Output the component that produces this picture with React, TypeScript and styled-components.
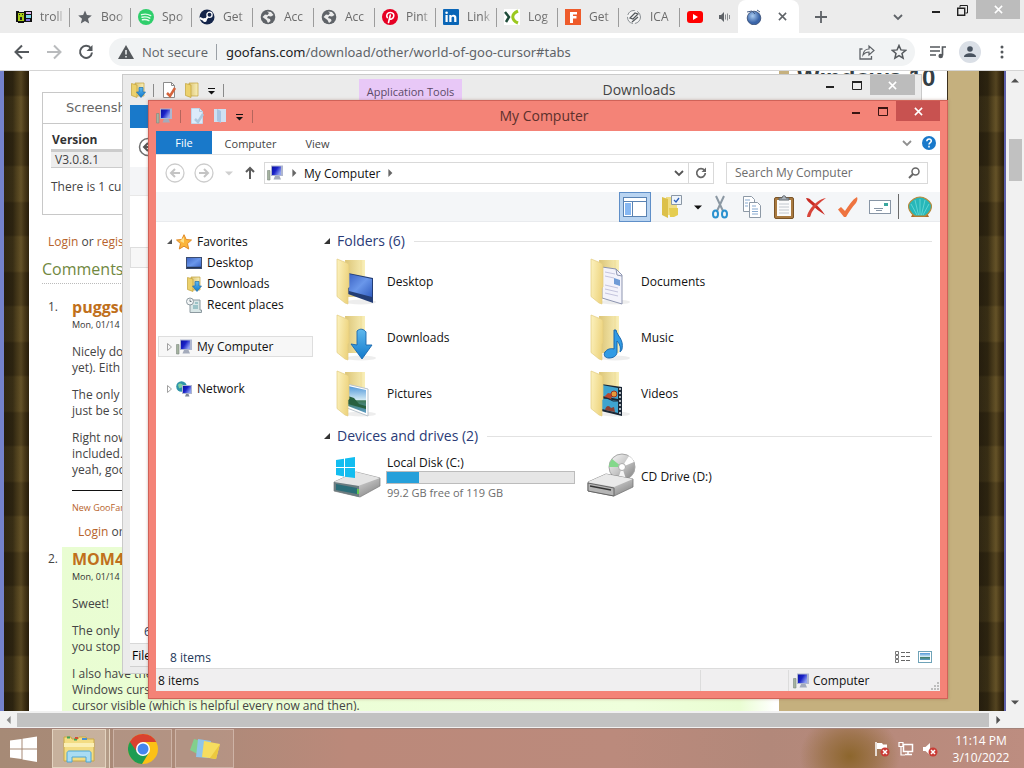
import React from "react";
import styled, { createGlobalStyle, css } from "styled-components";

const ui = `"Open Sans", "Noto Sans", sans-serif`;

const GlobalStyle = createGlobalStyle`
  *, *::before, *::after { box-sizing: border-box; }
  body { margin: 0; font-family: ${ui}; font-size: 12px; overflow: hidden; }
  button { font: inherit; color: inherit; background: none; border: 0; padding: 0; margin: 0; }
  h1, h2, h3, p, ul, ol { margin: 0; padding: 0; font-weight: normal; }
  ul, ol { list-style: none; }
  svg { display: block; flex: none; }
`;

/* ---------- desktop ---------- */

const Desktop = styled.div`
  position: relative;
  height: 100vh;
  min-height: 640px;
  display: flex;
  flex-direction: column;
  overflow: hidden;
`;

const Browser = styled.div`
  flex: 1;
  min-height: 0;
  display: flex;
  flex-direction: column;
  background: #fff;
`;

/* ---------- browser tab strip ---------- */

const TabStrip = styled.div`
  display: flex;
  height: 33px;
  flex: none;
  padding-left: 9px;
  background: #ececec;
  color: #6b6b6b;
`;

const Tab = styled.button`
  flex: 0 1 61px;
  min-width: 0;
  height: 33px;
  display: flex;
  align-items: center;
  gap: 8px;
  padding: 0 5px 0 7px;
  position: relative;
  font: 12px/16px ${ui};
  text-align: left;
  &::after {
    content: "";
    position: absolute;
    right: 0;
    top: 8px;
    height: 19px;
    width: 1px;
    background: #9c9c9c;
  }
`;

const TabText = styled.span`
  flex: 1;
  white-space: nowrap;
  mask-image: linear-gradient(90deg, #000 65%, transparent);
`;

const MediaTab = styled(Tab)`
  flex-basis: 58px;
  gap: 15px;
  padding-right: 6px;
  &::after { display: none; }
`;

const ActiveTab = styled(Tab)`
  background: #fff;
  border-radius: 8px 8px 0 0;
  gap: 16px;
  padding: 0 8px;
  &::after { display: none; }
`;

const StripButton = styled.button<{ $w: number }>`
  width: ${(p) => p.$w}px;
  height: 33px;
  display: flex;
  align-items: center;
  justify-content: center;
`;

const StripEnd = styled.div`
  margin-left: auto;
  display: flex;
  padding-right: 4px;
`;

const Caption = styled.button<{ $w?: number; $h?: number; $bg?: string }>`
  width: ${(p) => p.$w ?? 27}px;
  height: ${(p) => p.$h ?? 20}px;
  background: ${(p) => p.$bg ?? "transparent"};
  display: flex;
  align-items: center;
  justify-content: center;
`;

/* ---------- browser toolbar ---------- */

const NavBar = styled.div`
  height: 38px;
  flex: none;
  display: flex;
  align-items: center;
  padding: 0 6px;
  border-bottom: 1px solid #d5d5d5;
  color: #5f6368;
`;

const NavButton = styled.button`
  width: 32px;
  height: 32px;
  display: flex;
  align-items: center;
  justify-content: center;
`;

const OmniBox = styled.div`
  flex: 1;
  height: 28px;
  margin: 0 7px;
  padding: 0 0 0 9px;
  border-radius: 14px;
  background: #f1f3f4;
  display: flex;
  align-items: center;
  font: 13px/20px ${ui};
`;

const Secure = styled.button`
  display: flex;
  align-items: center;
  gap: 8px;
  padding-right: 8px;
  border-right: 1px solid #9aa0a6;
  line-height: 16px;
`;

const Url = styled.span`
  flex: 1;
  padding-left: 9px;
  white-space: nowrap;
  font-family: "Noto Sans", sans-serif;
  b { font-weight: normal; color: #202124; }
`;

const Avatar = styled.span`
  width: 22px;
  height: 22px;
  border-radius: 50%;
  background: #dadfe6;
  display: flex;
  align-items: center;
  justify-content: center;
`;

/* ---------- web page ---------- */

const Viewport = styled.div`
  flex: 1;
  min-height: 0;
  display: flex;
`;

const WebPage = styled.div`
  flex: 1;
  min-width: 0;
  display: flex;
  overflow: hidden;
  background: #fff;
  font: 12px/16px ${ui};
  color: #444;
`;

const Curtain = styled.div<{ $side: "left" | "right" }>`
  flex: none;
  width: ${(p) => (p.$side === "left" ? 29 : 27)}px;
  ${(p) => (p.$side === "left" ? "border-left: 4px solid #7482cc;" : "border-right: 2px solid #5c5fa8;")}
  background:
    repeating-linear-gradient(180deg, rgba(20,12,0,0.22) 0 24px, rgba(90,70,25,0.12) 26px 60px, rgba(20,12,0,0.22) 62px 70px),
    linear-gradient(90deg, #2a2312 0%, #332a14 35%, #4c3e1d 50%, #66542a 68%, #4a3a19 82%, #2a1f0c 100%);
`;

const Article = styled.main`
  flex: 1;
  min-width: 0;
  padding: 21px 0 0 13px;
  white-space: nowrap;
  overflow: hidden;
`;

const Panel = styled.section`
  height: 123px;
  border: 1px solid #c8c8c8;
  margin-right: 13px;
`;

const PanelTab = styled.button`
  display: block;
  width: 100%;
  height: 31px;
  padding-left: 23px;
  text-align: left;
  border-bottom: 1px solid #c8c8c8;
  font: 13px/30px "DejaVu Sans", sans-serif;
  color: #666;
`;

const VersionTable = styled.table`
  margin: 8px 8px 11px;
  width: 300px;
  border-collapse: collapse;
  text-align: left;
  th { padding: 0 1px 1px; line-height: 16px; border-bottom: 3px solid #ccc; color: #333; }
  td { padding: 0 4px; line-height: 15px; background: #eee; border-bottom: 1px solid #ccc; }
`;

const PanelText = styled.p`
  padding-left: 8px;
`;

const Link = styled.a`
  color: #b7632b;
  text-decoration: none;
`;

const LoginLine = styled.div<{ $top?: boolean }>`
  padding: ${(p) => (p.$top ? 19 : 0)}px 0 0 6px;
`;

const CommentsTitle = styled.h2`
  margin: 7px 0 11px;
  padding-bottom: 2px;
  border-bottom: 1px dotted #bbb;
  font-size: 16px;
  line-height: 24px;
  color: #71883f;
`;

const Comment = styled.li`
  display: grid;
  grid-template-columns: 20px 1fr;
  margin-bottom: 7px;
`;

const Num = styled.span`
  padding: 4px 0 0 6px;
  line-height: 16px;
`;

const CommentBody = styled.div<{ $own?: boolean }>`
  padding: 0 10px;
  ${(p) =>
    p.$own &&
    css`
      background: linear-gradient(90deg, #e9fdd2, #efffdc 80%, #e9fdd2 95%, #fff);
      margin-right: 4px;
      min-height: 200px;
    `}
  h3 { font-weight: bold; font-size: 16px; line-height: 24px; color: #c0701c; }
  time { display: block; font-size: 9px; line-height: 12px; color: #333; }
  p { margin-top: 11px; }
  time + p { margin-top: 13px; }
`;

const Signature = styled.div`
  margin-top: 12px;
  padding: 9px 0 8px;
  border-top: 1px solid #111;
  font-size: 9px;
  line-height: 16px;
`;

const SideBar = styled.aside`
  width: 200px;
  flex: none;
  padding: 0 31px 0 10px;
  background: #c5b07e;
`;

const SideCard = styled.div`
  height: 566px;
  background: #fff;
  border-right: 1px solid #3a2f1c;
  padding-left: 8px;
  font: bold 24px/14px "Liberation Sans", sans-serif;
  color: #343f45;
  white-space: nowrap;
`;

const VScroll = styled.div`
  width: 18px;
  flex: none;
  background: #f1f1f1;
  display: flex;
  flex-direction: column;
  align-items: center;
  justify-content: space-between;
  padding: 5px 0;
`;

const VThumb = styled.div`
  width: 13px;
  height: 42px;
  margin: 54px 0 auto;
  background: #c1c1c1;
`;

const HScroll = styled.div`
  height: 17px;
  flex: none;
  background: #f1f1f1;
  display: flex;
  align-items: center;
  padding: 0 18px 0 0;
`;

const HThumb = styled.div`
  flex: 1;
  height: 14px;
  background: #c2c2c2;
`;

const ScrollArrow = styled.button`
  width: 17px;
  height: 9px;
  display: flex;
  align-items: center;
  justify-content: center;
`;

/* ---------- explorer windows ---------- */

const BackWindow = styled.section`
  position: absolute;
  left: 122px;
  top: 74px;
  right: 102px;
  bottom: 94px;
  padding: 0 6px 6px 7px;
  display: flex;
  flex-direction: column;
  background: #ebebeb;
  border: 1px solid #cacaca;
`;

const BackTitle = styled.header`
  height: 30px;
  flex: none;
  display: flex;
  align-items: center;
`;

const QuickBar = styled.div<{ $gap: number }>`
  display: flex;
  align-items: center;
  gap: ${(p) => p.$gap}px;
`;

const Divider = styled.span<{ $c: string }>`
  width: 1px;
  height: 13px;
  background: ${(p) => p.$c};
`;

const ToolTab = styled.span`
  margin-left: 135px;
  align-self: flex-end;
  width: 103px;
  height: 26px;
  padding-top: 4px;
  background: #e8c8f7;
  text-align: center;
  font-size: 11px;
  line-height: 18px;
  color: #5b4a66;
`;

const WindowTitle = styled.h2<{ $c: string }>`
  flex: 1;
  text-align: center;
  font-size: 14px;
  line-height: 28px;
  color: ${(p) => p.$c};
`;

const CaptionRow = styled.div`
  align-self: flex-start;
  display: flex;
`;

const BackClient = styled.div`
  flex: 1;
  min-height: 0;
  display: flex;
  flex-direction: column;
  background: #fff;
`;

const BackRibbon = styled.div`
  height: 23px;
  flex: none;
  width: 56px;
  background: #1979ca;
`;

const BackNav = styled.div`
  height: 39px;
  flex: none;
  padding: 9px 8px;
`;

const BackTools = styled.div`
  height: 29px;
  flex: none;
  background: #f4f5f7;
  border-bottom: 1px solid #e8e8e8;
`;

const BackTree = styled.div`
  flex: 1;
  padding-top: 51px;
  &::before {
    content: "";
    display: block;
    width: 156px;
    height: 21px;
    background: #f7f7f7;
    border: 1px solid #dedede;
  }
`;

const BackCount = styled.p`
  padding-left: 14px;
  line-height: 22px;
  color: #1e395b;
`;

const BackStatus = styled.footer`
  height: 24px;
  flex: none;
  padding-left: 2px;
  border-top: 1px solid #d8d8d8;
  border-bottom: 1px solid #d0d0d0;
  background: #f0f0f0;
  line-height: 24px;
  color: #000;
`;

const Explorer = styled.section`
  position: absolute;
  left: 148px;
  top: 100px;
  right: 76px;
  bottom: 69px;
  padding: 0 7px 7px;
  display: flex;
  flex-direction: column;
  background: #f48377;
  border: 1px solid #d06258;
  box-shadow: 0 0 3px rgba(120, 60, 40, 0.35);
`;

const TitleBar = styled.header`
  position: relative;
  height: 30px;
  flex: none;
  display: flex;
  align-items: center;
  justify-content: space-between;
`;

const CenterTitle = styled(WindowTitle)`
  position: absolute;
  inset: 0;
  padding-right: 8px;
  line-height: 30px;
`;

const Client = styled.div`
  flex: 1;
  min-height: 0;
  display: flex;
  flex-direction: column;
  background: #fff;
  color: #111;
`;

const Ribbon = styled.nav`
  height: 24px;
  flex: none;
  display: flex;
  border-bottom: 1px solid #e2e2e2;
`;

const RibbonTab = styled.button<{ $file?: boolean; $w: number }>`
  width: ${(p) => p.$w}px;
  height: 23px;
  line-height: ${(p) => (p.$file ? 23 : 25)}px;
  font-size: 11px;
  background: ${(p) => (p.$file ? "#1979ca" : "transparent")};
  color: ${(p) => (p.$file ? "#fff" : "#444")};
`;

const RibbonEnd = styled.div`
  margin-left: auto;
  display: flex;
  align-items: center;
  gap: 10px;
  padding-right: 4px;
`;

const AddressRow = styled.div`
  height: 37px;
  flex: none;
  display: flex;
  align-items: center;
  padding: 0 12px 1px 9px;
`;

const PlainButton = styled.button<{ $w: number }>`
  width: ${(p) => p.$w}px;
  height: 22px;
  flex: none;
  display: flex;
  align-items: center;
  justify-content: center;
`;

const AddressBox = styled.div`
  flex: 1;
  min-width: 0;
  height: 22px;
  display: flex;
  align-items: center;
  border: 1px solid #d9d9d9;
  padding-left: 2px;
  color: #111;
`;

const HistoryButton = styled(PlainButton)`
  height: 20px;
  margin-left: auto;
`;

const RefreshButton = styled(PlainButton)`
  height: 20px;
  border-left: 1px solid #d9d9d9;
`;

const SearchBox = styled.label`
  width: 202px;
  height: 22px;
  margin-left: 12px;
  padding: 0 7px 0 8px;
  display: flex;
  align-items: center;
  border: 1px solid #d9d9d9;
  input {
    flex: 1;
    min-width: 0;
    border: 0;
    padding: 0;
    outline: none;
    background: none;
    font: 12px/18px ${ui};
  }
  input::placeholder { color: #6d6d6d; opacity: 1; }
`;

const ToolRow = styled.div`
  height: 30px;
  flex: none;
  display: flex;
  justify-content: flex-end;
  align-items: center;
  background: #f4f6f8;
  border-bottom: 1px solid #e9ebee;
`;

const ToolDivider = styled.span`
  width: 1px;
  height: 25px;
  margin-left: 2px;
  background: #6a6a6a;
`;

const ToolButton = styled.button<{ $on?: boolean; $w?: number }>`
  width: ${(p) => p.$w ?? 32}px;
  height: 30px;
  display: flex;
  align-items: center;
  justify-content: center;
  ${(p) =>
    p.$on &&
    css`
      background: #b9d4f1;
      border: 1px solid #5f8fc8;
    `}
`;

const Body = styled.div`
  flex: 1;
  min-height: 0;
  display: flex;
`;

const Tree = styled.nav`
  width: 164px;
  flex: none;
  padding: 9px 7px 0 2px;
`;

const TreeRow = styled.button<{ $sub?: boolean; $on?: boolean; $gap?: boolean }>`
  width: 100%;
  height: 21px;
  margin-top: ${(p) => (p.$gap ? 21 : 0)}px;
  padding-left: ${(p) => (p.$sub ? 28 : 8)}px;
  display: flex;
  align-items: center;
  gap: 5px;
  line-height: 19px;
  background: ${(p) => (p.$on ? "#f7f7f7" : "transparent")};
  outline: ${(p) => (p.$on ? "1px solid #dedede" : "none")};
  outline-offset: -1px;
  white-space: nowrap;
`;

const TreeTwist = styled.span`
  width: 7px;
  margin-right: -2px;
`;

const Content = styled.div`
  flex: 1;
  min-width: 0;
  padding: 9px 8px 0 3px;
`;

const GroupHead = styled.button`
  width: 100%;
  height: 20px;
  display: flex;
  align-items: center;
  gap: 6px;
  font-size: 14px;
  line-height: 20px;
  color: #2a3b77;
  white-space: nowrap;
  &::after {
    content: "";
    flex: 1;
    margin-left: 3px;
    height: 1px;
    background: #e2e2e2;
  }
`;

const Grid = styled.div`
  display: grid;
  grid-template-columns: repeat(2, 254px);
  grid-auto-rows: 56px;
  padding: 3px 0 4px 10px;
`;

const Tile = styled.button`
  display: grid;
  grid-template-columns: 50px 1fr;
  gap: 4px;
  align-items: center;
  text-align: left;
  line-height: 16px;
`;

const DriveInfo = styled.span`
  display: block;
  small { display: block; font-size: 11px; line-height: 15px; color: #6d6d6d; }
`;

const Meter = styled.span`
  display: block;
  width: 189px;
  height: 13px;
  margin: 0 0 1px -1px;
  background: #e6e6e6;
  border: 1px solid #bcbcbc;
`;

const MeterFill = styled.span`
  display: block;
  height: 100%;
  background: #26a0da;
`;

const Details = styled.div`
  height: 24px;
  flex: none;
  display: flex;
  align-items: center;
  justify-content: space-between;
  padding: 2px 8px 0 14px;
  color: #1e395b;
`;

const ViewButtons = styled.div`
  display: flex;
  gap: 7px;
`;

const StatusBar = styled.footer`
  height: 23px;
  flex: none;
  display: flex;
  align-items: stretch;
  line-height: 22px;
  padding: 1px 0 0 2px;
  background: #f0eff0;
  border-top: 1px solid #dcdcdc;
`;

const StatusPane = styled.span<{ $w?: number }>`
  ${(p) => (p.$w ? `width: ${p.$w}px; padding-left: 4px; border-left: 1px solid #dcdcdc;` : "flex: 1;")}
  display: flex;
  align-items: center;
  gap: 4px;
`;

const Grip = styled.span`
  margin-left: auto;
  align-self: flex-end;
`;

/* ---------- taskbar ---------- */

const TaskBar = styled.footer`
  height: 40px;
  flex: none;
  display: flex;
  align-items: center;
  border-top: 1px solid #a3837a;
  background:
    radial-gradient(ellipse 50px 44px at 83% 70%, rgba(136, 98, 36, 0.9), rgba(146, 106, 56, 0.65) 50%, transparent),
    linear-gradient(90deg, #a68a76 0%, #ad8a79 20%, #bb897a 34%, #bb8a7c 60%, #b2887a 75%, #b88a7c 88%, #bd8d80 100%);
`;

const StartButton = styled.button`
  width: 52px;
  height: 40px;
  display: flex;
  align-items: center;
  padding-left: 10px;
`;

const TaskButton = styled.button<{ $w: number; $on?: boolean }>`
  width: ${(p) => p.$w}px;
  height: 39px;
  margin-right: ${(p) => (p.$on ? 7 : 3)}px;
  display: flex;
  align-items: center;
  justify-content: center;
  background: ${(p) => (p.$on ? "rgba(230, 215, 195, 0.5)" : "rgba(200, 175, 165, 0.25)")};
  border: 1px solid ${(p) => (p.$on ? "#e3d3c0" : "rgba(225, 205, 195, 0.55)")};
  ${(p) => p.$on && "box-shadow: 3px 0 0 #b49c88, 4px 0 0 #e3d3c0;"}
`;

const Tray = styled.div`
  margin-left: auto;
  display: flex;
  align-items: center;
  gap: 8px;
`;

const Clock = styled.time`
  width: 86px;
  margin-left: -8px;
  text-align: center;
  font-size: 12px;
  line-height: 17px;
  color: #fff;
`;

/* ---------- drawings ---------- */

const Svg = (p: React.SVGProps<SVGSVGElement> & { w: number; h?: number }) => {
  const { w, h, ...rest } = p;
  return <svg width={w} height={h ?? w} viewBox={`0 0 ${w} ${h ?? w}`} fill="none" aria-hidden="true" {...rest} />;
};

const HiddenSvg = styled.svg`
  position: absolute;
`;

const Defs = () => (
  <HiddenSvg width="0" height="0" aria-hidden="true">
    <defs>
      <linearGradient id="flap" x1="0" x2="1" y2="0.3">
        <stop offset="0" stopColor="#fcf2bf" />
        <stop offset="1" stopColor="#eed581" />
      </linearGradient>
      <linearGradient id="back" x1="0" x2="1">
        <stop offset="0" stopColor="#dcc577" />
        <stop offset="1" stopColor="#f9efb8" />
      </linearGradient>
      <linearGradient id="blue" x1="0" x2="1" y2="1">
        <stop offset="0" stopColor="#3c63c4" />
        <stop offset="0.5" stopColor="#6a97ea" />
        <stop offset="1" stopColor="#315dc0" />
      </linearGradient>
      <linearGradient id="sky" x2="0" y2="1">
        <stop offset="0" stopColor="#4f96d8" />
        <stop offset="0.5" stopColor="#cfe8f4" />
        <stop offset="0.55" stopColor="#3f7a58" />
        <stop offset="1" stopColor="#5b9cc8" />
      </linearGradient>
      <linearGradient id="arrow" x2="0" y2="1">
        <stop offset="0" stopColor="#5fb9ee" />
        <stop offset="1" stopColor="#1179cb" />
      </linearGradient>
      <linearGradient id="metal" x2="1" y2="1">
        <stop offset="0" stopColor="#fafafa" />
        <stop offset="0.5" stopColor="#c6c6c6" />
        <stop offset="1" stopColor="#7b7b7b" />
      </linearGradient>
      <linearGradient id="monitor" x2="1" y2="0.6">
        <stop offset="0" stopColor="#0b12a0" />
        <stop offset="0.5" stopColor="#1a22c8" />
        <stop offset="1" stopColor="#8fa0f0" />
      </linearGradient>
      <radialGradient id="ball" cx="0.4" cy="0.35">
        <stop offset="0" stopColor="#a9cbf0" />
        <stop offset="1" stopColor="#3a64a8" />
      </radialGradient>
    </defs>
  </HiddenSvg>
);

const Globe = () => (
  <Svg w={16}>
    <circle cx="8" cy="8" r="7.300" fill="#5f6368" />
    <path d="M2.500 8 5 5.500 7.500 6 9 4 7 2.500 11 3l2.500 3L11 7.500l-3-.5-1 2 3 1 .5 2L8 14l-1.500-3Z" fill="#ececec" />
  </Svg>
);

const Steam = () => (
  <Svg w={16}>
    <circle cx="8" cy="8" r="7.500" fill="#14254a" />
    <path d="m.7 9 5.300 2.500L10 6" stroke="#fff" strokeWidth="2" />
    <circle cx="10.500" cy="5.800" r="2.600" stroke="#fff" strokeWidth="1.300" fill="#14254a" />
    <circle cx="5.800" cy="11" r="2" fill="#fff" />
  </Svg>
);

const tabs: { text: string; icon: React.ReactNode }[] = [
  {
    text: "troll",
    icon: (
      <Svg w={16}>
        <path d="M0 2h3v1h5V2h8v11h-8v1H2v-1H0Z" fill="#111" />
        <path d="M2 4h6v8H2Z" fill="#a9cc18" />
        <path d="M3 5h1v1H3ZM6 5h1v1H6ZM4 8h2v3H4Z" fill="#222" />
        <path d="M10 3h5v2h-5Z" fill="#e0b0f0" />
        <path d="M10 6h5v3h-5Z" fill="#7bd7e8" />
        <path d="M10 10h4v2h-4Z" fill="#7f6bd8" />
      </Svg>
    ),
  },
  {
    text: "Boo",
    icon: (
      <Svg w={16}>
        <path d="m8 1.500 1.900 4.600 4.900.4L11 9.700l1.200 4.800L8 11.900l-4.200 2.600L5 9.700 1.200 6.500l4.900-.4Z" fill="#5f6368" />
      </Svg>
    ),
  },
  {
    text: "Spo",
    icon: (
      <Svg w={16}>
        <circle cx="8" cy="8" r="8" fill="#2fce6b" />
        <path d="M3.500 5.700c3-.9 6.500-.6 9.200.9M4 8.300c2.600-.7 5.400-.4 7.800.9M4.400 10.800c2.200-.5 4.500-.3 6.500.8" stroke="#e4fbec" strokeWidth="1.400" strokeLinecap="round" />
      </Svg>
    ),
  },
  { text: "Get", icon: <Steam /> },
  { text: "Acc", icon: <Globe /> },
  { text: "Acc", icon: <Globe /> },
  {
    text: "Pint",
    icon: (
      <Svg w={16}>
        <circle cx="8" cy="8" r="8" fill="#e60023" />
        <path d="M5.300 8.600C3.900 6.300 5.300 3.500 8.300 3.500c2.700 0 4.100 2 3.300 4.300-.8 2.500-3.200 2.900-3.900 1.500M8.300 6 6.500 13.500" stroke="#fff" strokeWidth="1.600" strokeLinecap="round" />
      </Svg>
    ),
  },
  {
    text: "Link",
    icon: (
      <Svg w={16}>
        <rect width="16" height="16" rx="1" fill="#0a66b7" />
        <path d="M2.500 6h2.200v7H2.500ZM6.300 6h2.100v1c1.100-1.800 5-1.700 5 1.800V13h-2.200V9.200c0-2-2.700-1.900-2.700 0V13H6.300Z" fill="#fff" />
        <circle cx="3.600" cy="3.700" r="1.300" fill="#fff" />
      </Svg>
    ),
  },
  {
    text: "Log",
    icon: (
      <Svg w={16}>
        <rect width="16" height="16" fill="#fff" />
        <path d="m1 3 4 5-3 5" stroke="#1f4c3a" strokeWidth="2.500" />
        <path d="M14 2c-7 3-7 9 0 12" stroke="#9bc81f" strokeWidth="3" />
      </Svg>
    ),
  },
  {
    text: "Get",
    icon: (
      <Svg w={16}>
        <rect width="16" height="16" fill="#ee5b2b" />
        <path d="M5 3h7v2.500H8V7h3.500v2.500H8V14H5Z" fill="#fff" />
      </Svg>
    ),
  },
  {
    text: "ICA",
    icon: (
      <Svg w={16}>
        <circle cx="8" cy="8" r="6.500" fill="#f4f4f4" stroke="#8a8f94" strokeDasharray="9 2" />
        <path d="m4 9 5-5 3 1-5 5ZM6 13l6-5" stroke="#53585c" strokeWidth="1.200" />
      </Svg>
    ),
  },
];

const Minus = ({ c }: { c: string }) => (
  <Svg w={10}>
    <path d="M1 7h8" stroke={c} strokeWidth="2" />
  </Svg>
);
const Square = ({ c }: { c: string }) => (
  <Svg w={12} h={10}>
    <path d="M1 1.500h10M1.500 1v8.500h9V1" stroke={c} />
    <path d="M1 2h10" stroke={c} strokeWidth="2" />
  </Svg>
);
const Cross = ({ c, s = 9 }: { c: string; s?: number }) => (
  <svg width={s} height={s} viewBox="0 0 10 10" aria-hidden="true">
    <path d="m1 1 8 8M9 1 1 9" stroke={c} strokeWidth="1.700" />
  </svg>
);
const Triangle = ({ dir, c = "#505050", s = 9 }: { dir: "up" | "down" | "left" | "right"; c?: string; s?: number }) => {
  const d = { up: "M0 7 5 2l5 5Z", down: "M0 3 5 8l5-5Z", left: "M7 0 2 5l5 5Z", right: "M3 0 8 5l-5 5Z" }[dir];
  return (
    <svg width={s} height={s} viewBox="0 0 10 10" aria-hidden="true">
      <path d={d} fill={c} />
    </svg>
  );
};
const Overflow = () => (
  <Svg w={9}>
    <path d="M1 2.500h7" stroke="#111" />
    <path d="M1 5h7L4.500 8.500Z" fill="#111" />
  </Svg>
);
const Chevron = ({ c }: { c: string }) => (
  <Svg w={10}>
    <path d="m1 3 4 4 4-4" stroke={c} strokeWidth="1.800" />
  </Svg>
);
const Computer = () => (
  <Svg w={16}>
    <path d="M.5 5.500h2.500v9.500H.5Z" fill="#a5b3a0" stroke="#7d8a80" strokeWidth=".6" />
    <path d="M4 .5h12v10.500H4Z" fill="#aeb6cf" />
    <path d="M5 1.500h9v8.500H5Z" fill="url(#monitor)" />
    <path d="M8 11h4.500l1.500 3.500H6.500Z" fill="#a4abbb" />
  </Svg>
);
const SmallFolder = ({ children }: { children?: React.ReactNode }) => (
  <Svg w={16}>
    <path d="M5 1h9v13H5Z" fill="url(#back)" stroke="#c2a239" strokeWidth=".7" />
    <path d="M1.500 1.500 7 3v12.500l-5.500-2Z" fill="#ecd16c" stroke="#c2a239" strokeWidth=".7" />
    {children}
  </Svg>
);
const DownFolder = () => (
  <SmallFolder>
    <path d="M9 5.500h4V10h2.500L11 15.500 6.500 10H9Z" fill="url(#arrow)" stroke="#1c6fb0" strokeWidth=".7" />
  </SmallFolder>
);
const DocCheck = ({ pale }: { pale?: boolean }) => (
  <Svg w={16}>
    <path d="M2.500 .5h8l3 3v12h-11Z" fill={pale ? "#dcebfa" : "#fff"} stroke={pale ? "#c3d6ea" : "#8b8b8b"} />
    <path d="M10.500 .5v3h3" stroke={pale ? "#aec6de" : "#8b8b8b"} />
    <path d="m6 11 3 3 5-8" stroke={pale ? "#adc8df" : "#d5643c"} strokeWidth="2.500" />
  </Svg>
);
const PaleFolder = () => (
  <Svg w={14} h={16}>
    <path d="M1 1h12v13H1Z" fill="#cfe0f2" />
    <path d="m4 1 4 2v12l-4-2Z" fill="#a9c5e2" />
  </Svg>
);
const BigFolder = ({ children }: { children: React.ReactNode }) => (
  <Svg w={44} h={48}>
    <ellipse cx="28" cy="44" rx="15" ry="2.500" fill="#000" opacity=".07" />
    <path d="M12 2h20v37H14Z" fill="url(#back)" />
    <path d="M28 2v36" stroke="#eeda92" strokeWidth=".8" />
    {children}
    <path d="m4 1 10 4c1.500.6 2 1.500 2 3v21l-1 1v16l-3-1-8-6.500Z" fill="url(#flap)" stroke="#e2cc80" strokeWidth=".7" />
  </Svg>
);
const folders: { name: string; art: React.ReactNode }[] = [
  {
    name: "Desktop",
    art: (
      <>
        <path d="m15 15 25 5v25l-25-9Z" fill="#233d75" />
        <path d="m16 16 23 5v18l-23-6Z" fill="url(#blue)" />
      </>
    ),
  },
  {
    name: "Documents",
    art: (
      <>
        <path d="m15 9 14 2 6 6v29l-20-6Z" fill="#f3f3fb" stroke="#8d95b0" />
        <path d="m18 14 10 2M18 18l9 2M18 27l13 3M18 31l13 3M18 35l13 3" stroke="#c4c4dd" />
        <path d="m27 20 6 2v6l-6-2Z" fill="#6f9bd6" />
        <path d="m29 11 1 6 5 1" stroke="#8d95b0" />
      </>
    ),
  },
  {
    name: "Downloads",
    art: <path d="M24 17c3-3 7-2 9 1v13h6L29 45 18 30l6 1Z" fill="url(#arrow)" stroke="#1868ae" strokeWidth=".9" />,
  },
  {
    name: "Music",
    art: (
      <path d="M29 16c1 6 8 9 6 19-.5 2-2 3-2 3 1-6-1-9-3-11v11c0 4-4 6-8 6s-6-3-4-6 6-4 9-3V16Z" fill="#319be4" stroke="#1767ae" />
    ),
  },
  {
    name: "Pictures",
    art: (
      <>
        <path d="m14 14 21 5v27l-21-8Z" fill="#fff" stroke="#b9c4cc" />
        <path d="m15 16 18 4v23l-18-7Z" fill="url(#sky)" />
        <path d="m15 26 6 2 5 6 7 2v3l-18-5Z" fill="#28603f" />
      </>
    ),
  },
  {
    name: "Videos",
    art: (
      <>
        <path d="m14 14 21 3v29l-21-5Z" fill="#1b2735" />
        <path d="m15 15 16 3v11l-16-3ZM15 28l16 3v12l-16-4Z" fill="#3fa4cf" />
        <path d="m17 27 4-4 5 1-2 5-4-1Z" fill="#b8452c" />
        <circle cx="27" cy="24" r="3" fill="#e69a3a" stroke="#9c3324" />
        <path d="M18 40c1-5 4-5 6-2l3-1 1 5Z" fill="#8d4032" />
        <path d="M15 28h5l6 3h5" stroke="#1b2735" />
        <path d="M33 18v27" stroke="#dfe6ea" strokeWidth="1.500" strokeDasharray="2 2" />
      </>
    ),
  },
];

const DiskDrive = () => (
  <Svg w={48} h={44}>
    <path d="m1 27 22-10 24 6v8L27 42 1 36Z" fill="url(#metal)" stroke="#7d7d7d" strokeWidth=".7" />
    <path d="m1 27 24 4 22-8-24-6Z" fill="#e4e4e4" />
    <path d="m1 27 25 4v11L1 36Z" fill="#6c7c80" />
    <path d="m3 29 21 4v6L3 35Z" fill="#2b6d78" />
    <path d="M25 34v5" stroke="#62e03f" strokeWidth="1.500" />
    <path d="m3 5 8-1.300V12H3ZM12 3.500 22 2v10H12ZM3 13h8v8.500L3 20ZM12 13h10v10l-10-1.300Z" fill="#12bdf0" />
  </Svg>
);
const CdDrive = () => (
  <Svg w={50} h={48}>
    <circle cx="35" cy="14" r="13" fill="url(#metal)" stroke="#a6a6a6" />
    <path d="M35 14 25 6a13 13 0 0 0-3 8Z" fill="#83d88b" />
    <path d="m35 14 12-5a13 13 0 0 0-5-6Z" fill="#fff" />
    <path d="m35 14-4 12a13 13 0 0 0 8 0Z" fill="#f4f4f4" />
    <circle cx="35" cy="14" r="3.500" fill="#fff" stroke="#aaa" />
    <path d="m1 29 18-8 27 5v8L27 43 1 38Z" fill="url(#metal)" stroke="#777" strokeWidth=".8" />
    <path d="m1 29 26 5 19-8-27-5Z" fill="#e9e9e9" />
    <path d="m1 30 26 5v8L1 38Z" fill="#b5b5b5" stroke="#666" />
    <path d="m3 33 21 4" stroke="#333" strokeWidth="1.500" />
  </Svg>
);

const tools: { name: string; art: React.ReactNode }[] = [
  {
    name: "Cut",
    art: (
      <>
        <path d="m8 1 7 15M16 1 9 16" stroke="#8b98a3" strokeWidth="2" />
        <ellipse cx="7.500" cy="19" rx="2.500" ry="3.500" stroke="#2a91cf" strokeWidth="2" />
        <ellipse cx="16.500" cy="19" rx="2.500" ry="3.500" stroke="#2a91cf" strokeWidth="2" />
      </>
    ),
  },
  {
    name: "Copy",
    art: (
      <>
        <path d="M3.500 1.500h8l3 3v12h-11Z" fill="#fff" stroke="#8d99a6" />
        <path d="M9.500 7.500h8l3 3v12h-11Z" fill="#fff" stroke="#8d99a6" />
        <path d="M5 5h5M5 8h3M5 11h3M12 11h4M12 14h6M12 16.500h6M12 19h6" stroke="#87a9cf" />
      </>
    ),
  },
  {
    name: "Paste",
    art: (
      <>
        <rect x="2.500" y="2.500" width="19" height="21" rx="1.500" fill="#a97a40" stroke="#7a5428" />
        <path d="M5 5h14v16H5Z" fill="#fbfbfb" />
        <path d="M7 9h10M7 12h10M7 15h10M7 18h10" stroke="#c2c8cf" />
        <path d="M7 5V3h3c0-3 4-3 4 0h3v2Z" fill="#aab2ba" stroke="#5f666d" />
      </>
    ),
  },
  {
    name: "Delete",
    art: (
      <>
        <path d="M2 3c3 0 4 1 6 3 5 4 9 8 13 14-5-3-10-7-14-11C5 7 3 6 2 3Z" fill="#c92a22" />
        <path d="M22 3c-6 4-11 9-14 14-1 2-1 3-2 5H3c0-3 2-6 4-9 4-5 9-9 15-10Z" fill="#d8453a" />
      </>
    ),
  },
  { name: "Rename", art: <path d="M2 14.500 5 12l4 4C13 10 16 5 21 2c1 2 0 4-1 6-4 4-7 9-10 14H8Z" fill="#ee7440" /> },
  {
    name: "Mail",
    art: (
      <>
        <rect x="1.500" y="5.500" width="21" height="13" fill="#fff" stroke="#8795a5" />
        <path d="M16 8h4v3h-4Z" fill="#3ba79f" />
        <path d="M6 13.500h9M8 15.500h6" stroke="#8795a5" />
      </>
    ),
  },
];

const Shell = () => (
  <Svg w={24}>
    <path d="M5 18h14l2 4H3Z" fill="#b06b28" />
    <path d="M7 21C2 18-.5 13 1 9c2-4 7-7 11-7s9 3 11 7c1.500 4-1 9-6 12Z" fill="#27b7b9" stroke="#b98b3c" strokeWidth="1.200" />
    <path d="M12 20V4M10.500 20 7 5M13.500 20 17 5M9 20 3 9M15 20l6-11" stroke="#6fdcd9" strokeWidth=".8" />
  </Svg>
);

/* ---------- parts ---------- */

const Chrome = () => (
  <Browser>
    <TabStrip>
      {tabs.map((t, i) => (
        <Tab key={i}>
          {t.icon}
          <TabText>{t.text}</TabText>
        </Tab>
      ))}
      <MediaTab aria-label="YouTube, playing">
        <Svg w={16}>
          <rect y="2" width="16" height="12" rx="3" fill="#f00" />
          <path d="m6 5 5 3-5 3Z" fill="#fff" />
        </Svg>
        <Svg w={12}>
          <path d="M1 4h2l3-3v10L3 8H1Z" fill="#5f6368" />
          <path d="M7.500 3.500v5M9.500 2.500v7M11.500 4v4" stroke="#8a8d90" />
        </Svg>
      </MediaTab>
      <ActiveTab aria-label="World of Goo cursor">
        <Svg w={16}>
          <circle cx="8" cy="9" r="6.800" fill="url(#ball)" stroke="#33496e" strokeWidth=".8" />
          <path d="m1 3 5-1 3 3M11 1l3 2" stroke="#465d86" />
        </Svg>
        <Cross c="#5f6368" s={9} />
      </ActiveTab>
      <StripButton $w={44} aria-label="New tab">
        <Svg w={12}>
          <path d="M6 0v12M0 6h12" stroke="#5f6368" strokeWidth="1.800" />
        </Svg>
      </StripButton>
      <StripEnd>
        <StripButton $w={48} aria-label="Search tabs">
          <Chevron c="#5f6368" />
        </StripButton>
        <Caption aria-label="Minimize"><Minus c="#222" /></Caption>
        <Caption aria-label="Restore">
          <Svg w={11}>
            <path d="M3 2.500V.5h7.500V8H8.500" stroke="#222" />
            <path d="M.7 3.200h7v7h-7Z" stroke="#222" strokeWidth="1.400" />
          </Svg>
        </Caption>
        <Caption $w={44} $h={19} $bg="#bcbcbc" aria-label="Close"><Cross c="#fff" /></Caption>
      </StripEnd>
    </TabStrip>
    <NavBar>
      <NavButton aria-label="Back">
        <Svg w={16}><path d="M15 8H2M8 1.500 1.500 8 8 14.500" stroke="#54585c" strokeWidth="2" /></Svg>
      </NavButton>
      <NavButton aria-label="Forward">
        <Svg w={16}><path d="M1 8h13M8 1.500 14.500 8 8 14.500" stroke="#b9bbbd" strokeWidth="2" /></Svg>
      </NavButton>
      <NavButton aria-label="Reload">
        <Svg w={16}>
          <path d="M13 4.500A6 6 0 1 0 14 8.500" stroke="#54585c" strokeWidth="2" />
          <path d="M14.500 1v6h-6Z" fill="#54585c" />
        </Svg>
      </NavButton>
      <OmniBox>
        <Secure>
          <Svg w={16}>
            <path d="M8 1 16 15H0Z" fill="#54585c" />
            <path d="M8 6v4.500M8 12v1.500" stroke="#f1f3f4" strokeWidth="1.500" />
          </Svg>
          Not secure
        </Secure>
        <Url><b>goofans.com</b>/download/other/world-of-goo-cursor#tabs</Url>
        <NavButton aria-label="Share">
          <Svg w={16}>
            <path d="M3.500 5H1v10h11.500v-3" stroke="#5f6368" strokeWidth="1.300" />
            <path d="M4 11c.5-4 3-6 6-6V2l5 4.500L10 11V8c-2.500 0-4.500 1-6 3Z" stroke="#5f6368" strokeWidth="1.200" />
          </Svg>
        </NavButton>
        <NavButton aria-label="Bookmark">
          <Svg w={16}>
            <path d="m8 1.500 1.900 4.400 4.800.4L11 9.500l1.100 4.700L8 11.700l-4.100 2.500L5 9.500 1.300 6.300l4.800-.4Z" stroke="#54585c" strokeWidth="1.500" />
          </Svg>
        </NavButton>
      </OmniBox>
      <NavButton aria-label="Media">
        <Svg w={16}>
          <path d="M0 3h10M0 7h10M0 11h6" stroke="#54585c" strokeWidth="1.700" />
          <path d="M12.500 11.500V3H16" stroke="#54585c" strokeWidth="1.700" />
          <circle cx="10.700" cy="12" r="2.300" fill="#54585c" />
        </Svg>
      </NavButton>
      <NavButton aria-label="Profile">
        <Avatar>
          <Svg w={12}>
            <circle cx="6" cy="3" r="2.800" fill="#48525f" />
            <path d="M0 11c0-5 12-5 12 0Z" fill="#48525f" />
          </Svg>
        </Avatar>
      </NavButton>
      <NavButton aria-label="Menu">
        <Svg w={4} h={14}>
          <circle cx="2" cy="2" r="1.500" fill="#54585c" />
          <circle cx="2" cy="7" r="1.500" fill="#54585c" />
          <circle cx="2" cy="12" r="1.500" fill="#54585c" />
        </Svg>
      </NavButton>
    </NavBar>
    <Viewport>
      <WebPage>
        <Curtain $side="left" />
        <Article>
          <Panel>
            <PanelTab>Screenshots</PanelTab>
            <VersionTable>
              <thead><tr><th>Version</th></tr></thead>
              <tbody><tr><td>V3.0.8.1</td></tr></tbody>
            </VersionTable>
            <PanelText>There is 1 cur</PanelText>
          </Panel>
          <LoginLine $top>
            <Link href="#login">Login</Link> or <Link href="#register">regist</Link>
          </LoginLine>
          <CommentsTitle>Comments</CommentsTitle>
          <ol>
            <Comment>
              <Num>1.</Num>
              <CommentBody>
                <h3>puggso</h3>
                <time>Mon, 01/14</time>
                <p>Nicely do<br />yet). Eith</p>
                <p>The only<br />just be so</p>
                <p>Right now<br />included.<br />yeah, goo</p>
                <Signature><Link href="#goofans">New GooFan</Link></Signature>
                <LoginLine><Link href="#login">Login</Link> or</LoginLine>
              </CommentBody>
            </Comment>
            <Comment>
              <Num>2.</Num>
              <CommentBody $own>
                <h3>MOM4E</h3>
                <time>Mon, 01/14</time>
                <p>Sweet!</p>
                <p>The only<br />you stop</p>
                <p>I also have the<br />Windows curso<br />cursor visible (which is helpful every now and then).</p>
              </CommentBody>
            </Comment>
          </ol>
        </Article>
        <SideBar><SideCard>Windows 10</SideCard></SideBar>
        <Curtain $side="right" />
      </WebPage>
      <VScroll>
        <ScrollArrow aria-label="Scroll up"><Triangle dir="up" s={8} /></ScrollArrow>
        <VThumb />
        <ScrollArrow aria-label="Scroll down"><Triangle dir="down" s={8} /></ScrollArrow>
      </VScroll>
    </Viewport>
    <HScroll>
      <ScrollArrow aria-label="Scroll left"><Triangle dir="left" c="#8a8a8a" s={8} /></ScrollArrow>
      <HThumb />
      <ScrollArrow aria-label="Scroll right"><Triangle dir="right" s={8} /></ScrollArrow>
    </HScroll>
  </Browser>
);

const DownloadsWindow = () => (
  <BackWindow aria-label="Downloads">
    <BackTitle>
      <QuickBar $gap={7}>
        <DownFolder />
        <Divider $c="#8a8a8a" />
        <DocCheck />
        <SmallFolder />
        <Overflow />
        <Divider $c="#8a8a8a" />
      </QuickBar>
      <ToolTab>Application Tools</ToolTab>
      <WindowTitle $c="#444">Downloads</WindowTitle>
      <CaptionRow>
        <Caption aria-label="Minimize"><Minus c="#222" /></Caption>
        <Caption aria-label="Maximize"><Square c="#222" /></Caption>
        <Caption $w={45} $bg="#bcbcbc" aria-label="Close"><Cross c="#fff" /></Caption>
      </CaptionRow>
    </BackTitle>
    <BackClient>
      <BackRibbon />
      <BackNav>
        <Svg w={20}>
          <circle cx="10" cy="10" r="8.500" stroke="#6e6e6e" strokeWidth="1.500" />
          <path d="M15 10H6M10 6l-4 4 4 4" stroke="#555" strokeWidth="2" />
        </Svg>
      </BackNav>
      <BackTools />
      <BackTree />
      <BackCount>6 items</BackCount>
      <BackStatus>File</BackStatus>
    </BackClient>
  </BackWindow>
);

const ExplorerWindow = () => (
  <Explorer aria-label="My Computer">
    <TitleBar>
      <CenterTitle $c="#5c302c">My Computer</CenterTitle>
      <QuickBar $gap={8}>
        <Computer />
        <Divider $c="#b5655c" />
        <DocCheck pale />
        <PaleFolder />
        <Overflow />
        <Divider $c="#b5655c" />
      </QuickBar>
      <CaptionRow>
        <Caption aria-label="Minimize"><Minus c="#3a1512" /></Caption>
        <Caption aria-label="Maximize"><Square c="#3a1512" /></Caption>
        <Caption $w={44} $bg="#c85250" aria-label="Close"><Cross c="#fff" /></Caption>
      </CaptionRow>
    </TitleBar>
    <Client>
      <Ribbon>
        <RibbonTab $w={56} $file>File</RibbonTab>
        <RibbonTab $w={77}>Computer</RibbonTab>
        <RibbonTab $w={57}>View</RibbonTab>
        <RibbonEnd>
          <Chevron c="#8f8f8f" />
          <button aria-label="Help">
            <Svg w={14}>
              <circle cx="7" cy="7" r="7" fill="#1979ca" />
              <path d="M4.800 5.300C5 2.200 9.600 2.500 9.300 5.200 9.100 6.700 7 6.600 7 8.600M7 9.800v1.700" stroke="#fff" strokeWidth="1.500" />
            </Svg>
          </button>
        </RibbonEnd>
      </Ribbon>
      <AddressRow>
        <PlainButton $w={20} aria-label="Back">
          <Svg w={20}>
            <circle cx="10" cy="10" r="9" stroke="#cdcdcd" strokeWidth="1.300" />
            <path d="M15 10H6M10 6l-4 4 4 4" stroke="#c4c4c4" strokeWidth="2" />
          </Svg>
        </PlainButton>
        <PlainButton $w={38} aria-label="Forward">
          <Svg w={20}>
            <circle cx="10" cy="10" r="9" stroke="#cdcdcd" strokeWidth="1.300" />
            <path d="M5 10h9M10 6l4 4-4 4" stroke="#c4c4c4" strokeWidth="2" />
          </Svg>
        </PlainButton>
        <PlainButton $w={12} aria-label="Recent locations"><Triangle dir="down" c="#cfcfcf" s={8} /></PlainButton>
        <PlainButton $w={29} aria-label="Up">
          <Svg w={10} h={14}><path d="M5 13V2M1 6l4-4 4 4" stroke="#5c5c5c" strokeWidth="2" /></Svg>
        </PlainButton>
        <AddressBox>
          <Computer />
          <PlainButton $w={21} aria-label="Open list"><Triangle dir="right" c="#666" s={8} /></PlainButton>
          <button>My Computer</button>
          <PlainButton $w={20} aria-label="Open list"><Triangle dir="right" c="#666" s={8} /></PlainButton>
          <HistoryButton $w={18} aria-label="Previous locations"><Chevron c="#555" /></HistoryButton>
          <RefreshButton $w={25} aria-label="Refresh">
            <Svg w={12}>
              <path d="M9.500 3.500A4.300 4.300 0 1 0 10.300 6" stroke="#666" strokeWidth="1.700" />
              <path d="M11 .5v4.500H6.500Z" fill="#666" />
            </Svg>
          </RefreshButton>
        </AddressBox>
        <SearchBox>
          <input type="text" aria-label="Search My Computer" placeholder="Search My Computer" />
          <Svg w={12}>
            <circle cx="7.500" cy="4.500" r="3.500" stroke="#666" strokeWidth="1.500" />
            <path d="M5 7 1 11" stroke="#666" strokeWidth="2" />
          </Svg>
        </SearchBox>
      </AddressRow>
      <ToolRow>
        <ToolButton $on aria-label="Navigation pane">
          <Svg w={24} h={22}>
            <rect x=".5" y="1.500" width="23" height="19" fill="#fff" stroke="#5a83b3" />
            <path d="M1 5.500h22M9.500 6v14" stroke="#5a83b3" />
            <path d="M2 7h6v12H2Z" fill="#86b7f2" />
          </Svg>
        </ToolButton>
        <ToolButton $w={40} aria-label="Folder options">
          <Svg w={24}>
            <path d="M7 2h11v18H7Z" fill="#f0dd84" />
            <path d="m3 2 6 2v19l-6-3Z" fill="#dcc04a" />
            <path d="M12.500.5h10v9h-10Z" fill="#eef4fb" stroke="#8a97a5" />
            <path d="m15 5 2 2 3-4" stroke="#2c5fb8" strokeWidth="1.300" />
            <path d="M10 13h9v7l-4 2h-4Z" fill="#e5cd50" />
          </Svg>
        </ToolButton>
        <ToolButton $w={13} aria-label="More options"><Triangle dir="down" c="#111" s={8} /></ToolButton>
        {tools.map((t) => (
          <ToolButton key={t.name} aria-label={t.name}><Svg w={24}>{t.art}</Svg></ToolButton>
        ))}
        <ToolDivider />
        <ToolButton $w={41} aria-label="Shell"><Shell /></ToolButton>
      </ToolRow>
      <Body>
        <Tree>
          <TreeRow>
            <TreeTwist><Svg w={7}><path d="M6 1v5H1Z" fill="#555" /></Svg></TreeTwist>
            <Svg w={16}>
              <path d="m8 .7 2.200 4.800 5.300.5-4 3.600 1.200 5.400L8 12.200 3.300 15l1.200-5.400L.5 6l5.300-.5Z" fill="#fbb53a" stroke="#e08a28" />
              <path d="M8 3v6L4 7Z" fill="#fde08a" />
            </Svg>
            Favorites
          </TreeRow>
          <TreeRow $sub>
            <Svg w={16}>
              <rect x=".5" y="2.500" width="15" height="11" fill="url(#blue)" stroke="#3c4d70" />
              <path d="M1 12.500h14" stroke="#24344f" strokeWidth="1.500" />
            </Svg>
            Desktop
          </TreeRow>
          <TreeRow $sub><DownFolder />Downloads</TreeRow>
          <TreeRow $sub>
            <Svg w={16}>
              <path d="M5 3h9v10h1.500v2.500H4V5Z" fill="#d8e6e6" stroke="#8d9aa0" />
              <circle cx="4" cy="4.500" r="3.500" fill="#f2f5f6" stroke="#8d9aa0" />
              <path d="M4 2.500v2h1.500" stroke="#6f7d85" />
              <path d="M7 9h5M7 11h5M9 6h3" stroke="#5e9fa8" />
            </Svg>
            Recent places
          </TreeRow>
          <TreeRow $gap $on>
            <TreeTwist><Svg w={7} h={8}><path d="m1.500 .5 4 3.500-4 3.500Z" stroke="#a0a0a0" /></Svg></TreeTwist>
            <Computer />
            My Computer
          </TreeRow>
          <TreeRow $gap>
            <TreeTwist><Svg w={7} h={8}><path d="m1.500 .5 4 3.500-4 3.500Z" stroke="#a0a0a0" /></Svg></TreeTwist>
            <Svg w={16}>
              <circle cx="5.500" cy="5.500" r="5.300" fill="#2f95a8" />
              <path d="M2 4c2-3 4-1 5 0S4 8 3 7Z" fill="#7ed0a0" />
              <path d="M6 4h10v9H6Z" fill="#aeb6cf" />
              <path d="M7 5h8v7H7Z" fill="url(#monitor)" />
              <path d="M10 13h2.500l1 2.500H9Z" fill="#7d8698" />
            </Svg>
            Network
          </TreeRow>
        </Tree>
        <Content>
          <GroupHead>
            <Svg w={8}><path d="M7 1v6H1Z" fill="#333" /></Svg>
            Folders (6)
          </GroupHead>
          <Grid>
            {folders.map((f) => (
              <Tile key={f.name}>
                <BigFolder>{f.art}</BigFolder>
                {f.name}
              </Tile>
            ))}
          </Grid>
          <GroupHead>
            <Svg w={8}><path d="M7 1v6H1Z" fill="#333" /></Svg>
            Devices and drives (2)
          </GroupHead>
          <Grid>
            <Tile>
              <DiskDrive />
              <DriveInfo>
                Local Disk (C:)
                <Meter><MeterFill style={{ width: `${Math.round(((119 - 99.2) / 119) * 104)}%` }} /></Meter>
                <small>99.2 GB free of 119 GB</small>
              </DriveInfo>
            </Tile>
            <Tile>
              <CdDrive />
              CD Drive (D:)
            </Tile>
          </Grid>
        </Content>
      </Body>
      <Details>
        8 items
        <ViewButtons>
          <button aria-label="Details view">
            <Svg w={16} h={14}>
              <path d="M.5 1.500h3v3h-3ZM.5 5.500h3v3h-3ZM.5 9.500h3v3h-3Z" stroke="#777" />
              <path d="M6 2.500h9M6 6.500h9M6 10.500h9" stroke="#666" strokeDasharray="4 1" />
            </Svg>
          </button>
          <button aria-label="Large icons view">
            <Svg w={14} h={14}>
              <rect x=".5" y="1.500" width="13" height="11" fill="#fff" stroke="#6fa3b8" />
              <path d="M2 3h10v7H2Z" fill="url(#sky)" />
            </Svg>
          </button>
        </ViewButtons>
      </Details>
      <StatusBar>
        <StatusPane>8 items</StatusPane>
        <StatusPane $w={88} />
        <StatusPane $w={152}>
          <Computer />
          Computer
          <Grip>
            <Svg w={10}>
              <path d="M7 1h2v2H7ZM4 4h2v2H4ZM7 4h2v2H7ZM1 7h2v2H1ZM4 7h2v2H4ZM7 7h2v2H7Z" fill="#bdbdbd" />
            </Svg>
          </Grip>
        </StatusPane>
      </StatusBar>
    </Client>
  </Explorer>
);

const RedX = ({ x }: { x: number }) => (
  <>
    <circle cx={x} cy="11" r="4.500" fill="#c93c36" />
    <path d={`m${x - 2} 9 4 4m0-4-4 4`} stroke="#fff" strokeWidth="1.500" />
  </>
);

const Task = () => (
  <TaskBar>
    <StartButton aria-label="Start">
      <Svg w={27} h={26}>
        <path d="M0 4.500 11.500 3v9.500H0ZM12.500 2.800 27 .5v12H12.500ZM0 13.500h11.500V23L0 21.500ZM12.500 13.500H27V26l-14.500-2.500Z" fill="#fff" />
      </Svg>
    </StartButton>
    <TaskButton $w={54} $on aria-label="File Explorer">
      <Svg w={32} h={30}>
        <path d="M1 5V3h7l1 2h6l1-2h7l1 2h7v22H1Z" fill="#f3dc83" stroke="#c8a846" />
        <path d="M4 3.500h3M11 5.500h3" stroke="#3fa35a" strokeWidth="2" />
        <path d="M19 5h5" stroke="#4a8fd0" strokeWidth="2" />
        <path d="M12 4h3" stroke="#d04f37" strokeWidth="2" />
        <path d="M1 9h30v4H1Z" fill="#fbefb4" />
        <path d="M4 28V19c0-1 1-2 2-2h20c1 0 2 1 2 2v9h-5v-5H9v5Z" fill="#a9dcf3" stroke="#4da6d4" />
      </Svg>
    </TaskButton>
    <TaskButton $w={59} aria-label="Chrome">
      <Svg w={30}>
        <circle cx="15" cy="15" r="15" fill="#fbc116" />
        <path d="M15 15 2 7.500A15 15 0 0 0 14 30l7-11.500Z" fill="#1e9c52" />
        <path d="M15 8h13.200a15 15 0 0 0-26.300-.3L9 18Z" fill="#d9412f" />
        <circle cx="15" cy="15" r="7" fill="#fff" />
        <circle cx="15" cy="15" r="5.500" fill="#4586ee" />
      </Svg>
    </TaskButton>
    <TaskButton $w={59} aria-label="Sticky Notes">
      <Svg w={32} h={26}>
        <path d="m5 3 11 3-4 14L1 14Z" fill="#82cf8c" />
        <path d="m9 3 13 2-3 17-12-1Z" fill="#8fc5ea" />
        <path d="m15 5 16 3-4 15-14-2Z" fill="#f6dd5f" />
        <path d="m21 22 10-14-4 15Z" fill="#ecc93f" />
      </Svg>
    </TaskButton>
    <Tray>
      <Svg w={16}>
        <path d="M2 1v14" stroke="#fff" strokeWidth="1.500" />
        <path d="M3 2h5l1 1.500h4V9H8L7 8H3Z" fill="#fff" />
        <RedX x={11} />
      </Svg>
      <Svg w={16}>
        <path d="M5.500 3.500h9v7h-9ZM7 13.500h7M10 11v2" stroke="#fff" strokeWidth="1.500" />
        <path d="M1 1.500h4v4H1ZM3 6v8h4" stroke="#fff" strokeWidth="1.200" />
      </Svg>
      <Svg w={16}>
        <path d="M1 6h2.500L8 2v12L3.500 10H1Z" fill="#fff" />
        <RedX x={11} />
      </Svg>
      <Clock>11:14 PM<br />3/10/2022</Clock>
    </Tray>
  </TaskBar>
);

export default function App() {
  return (
    <>
      <GlobalStyle />
      <Defs />
      <Desktop>
        <Chrome />
        <DownloadsWindow />
        <ExplorerWindow />
        <Task />
      </Desktop>
    </>
  );
}
